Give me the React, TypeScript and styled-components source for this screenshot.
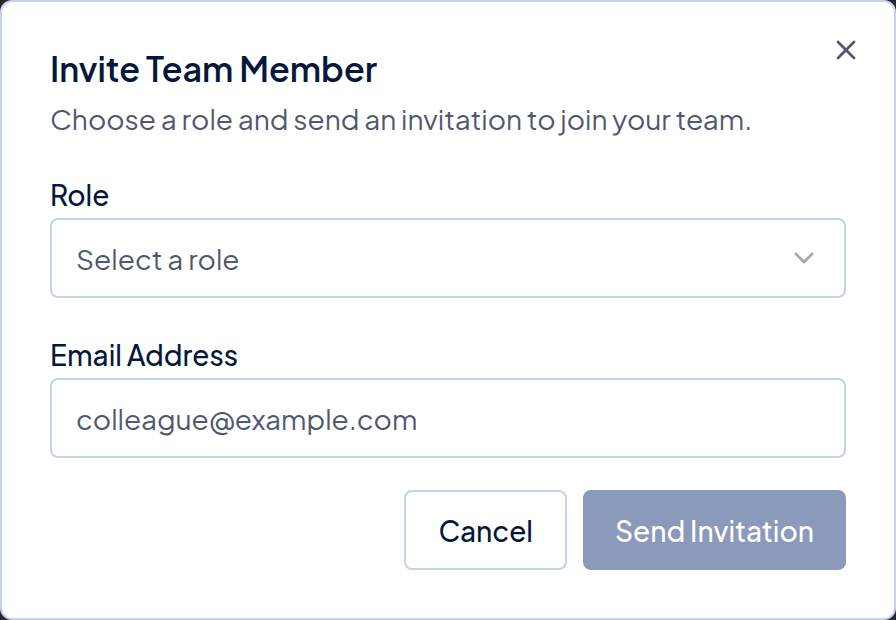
import React, { useState } from "react";
import styled, { createGlobalStyle } from "styled-components";
import { ChevronDown, X } from "lucide-react";

const GlobalStyle = createGlobalStyle`
  *, *::before, *::after { box-sizing: border-box; }
  body {
    margin: 0;
    background: #26282e;
    font-family: "Plus Jakarta Sans", Inter, "Open Sans", sans-serif;
    color: #04183d;
  }
  button, input, select { font: inherit; }
`;

const Dialog = styled.section`
  position: relative;
  min-height: 100vh;
  padding: 46px 48px 48px;
  border: 2px solid #c5d2ec;
  border-radius: 12px;
  background: #fff;
`;

const CloseButton = styled.button`
  position: absolute;
  top: 32px;
  right: 32px;
  display: flex;
  padding: 0;
  border: 0;
  background: none;
  color: #50586f;
  cursor: pointer;
`;

const Title = styled.h2`
  margin: 0;
  font-size: 34px;
  line-height: 42px;
  font-weight: 600;
`;

const Description = styled.p`
  margin: 8px 0 0;
  font-size: 28px;
  line-height: 42px;
  font-weight: 400;
  color: #50586f;
`;

const Form = styled.form`
  display: flex;
  flex-direction: column;
  gap: 32px;
  margin-top: 30px;
`;

const Field = styled.div`
  display: flex;
  flex-direction: column;
  gap: 2px;
`;

const Label = styled.label`
  padding-top: 4px;
  font-size: 28px;
  line-height: 42px;
  font-weight: 500;
`;

const SelectBox = styled.div`
  position: relative;
  display: grid;
`;

const Control = styled.input`
  width: 100%;
  height: 80px;
  padding: 0 24px;
  border: 2px solid #c5d2ec;
  border-radius: 8px;
  background: #fff;
  color: #50586f;
  font-size: 28px;
  font-weight: 400;
  appearance: none;
  &::placeholder { color: #50586f; opacity: 1; }
`;

const Chevron = styled(ChevronDown)`
  position: absolute;
  right: 26px;
  top: 24px;
  color: #a4a6b2;
  pointer-events: none;
`;

const Actions = styled.div`
  display: flex;
  justify-content: flex-end;
  gap: 16px;
`;

const Button = styled.button<{ $primary?: boolean }>`
  height: 80px;
  padding: 0 32px;
  border: ${(p) => (p.$primary ? "0" : "2px solid #c5d2ec")};
  border-radius: 8px;
  background: ${(p) => (p.$primary ? "#8b99bb" : "#fff")};
  color: ${(p) => (p.$primary ? "#fff" : "#04183d")};
  font-size: 28px;
  font-weight: 500;
`;

export default function App() {
  const [role, setRole] = useState("");
  const [email, setEmail] = useState("");
  return (
    <>
      <GlobalStyle />
      <Dialog role="dialog" aria-labelledby="title">
        <Title id="title">Invite Team Member</Title>
        <Description>Choose a role and send an invitation to join your team.</Description>
        <Form onSubmit={(e) => e.preventDefault()}>
          <Field>
            <Label htmlFor="role">Role</Label>
            <SelectBox>
              <Control as="select" id="role" value={role} onChange={(e) => setRole(e.target.value)}>
                <option value="">Select a role</option>
              </Control>
              <Chevron size={32} />
            </SelectBox>
          </Field>
          <Field>
            <Label htmlFor="email">Email Address</Label>
            <Control id="email" type="email" placeholder="colleague@example.com" value={email} onChange={(e) => setEmail(e.target.value)} />
          </Field>
          <Actions>
            <Button type="button">Cancel</Button>
            <Button type="submit" $primary disabled>Send Invitation</Button>
          </Actions>
        </Form>
        <CloseButton type="button" aria-label="Close"><X size={32} /></CloseButton>
      </Dialog>
    </>
  );
}
